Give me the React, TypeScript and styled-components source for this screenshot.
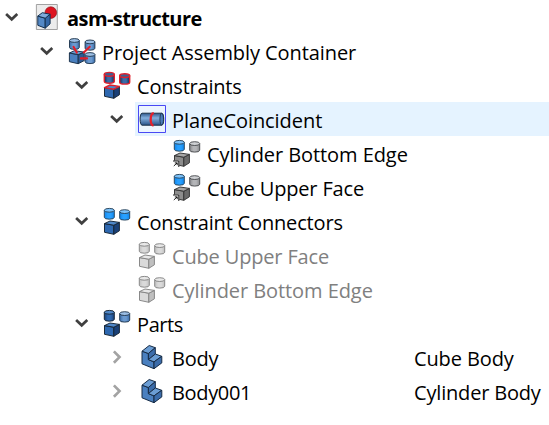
import React from "react";
import styled, { createGlobalStyle } from "styled-components";

const GlobalStyle = createGlobalStyle`
  *, *::before, *::after { box-sizing: border-box; }
  body {
    margin: 0;
    background: #fff;
    color: #000;
    font-family: "Open Sans", "Noto Sans", sans-serif;
    font-size: 20px;
    overflow: hidden;
  }
`;

const Tree = styled.div`
  width: 549px;
  height: 425px;
  overflow: hidden;
  background: #fff;
`;

const Row = styled.div`
  display: grid;
  grid-template-columns: 414px 1fr;
  height: 34px;
`;

const NameCell = styled.div<{ $depth: number; $selected?: boolean }>`
  display: flex;
  align-items: center;
  grid-column: ${(p) => (p.$selected ? "1 / -1" : "auto")};
  margin-left: ${(p) => p.$depth * 35}px;
  background: ${(p) => (p.$selected ? "#e5f3ff" : "transparent")};
`;

/* The highlight starts at the icon, so the toggle keeps the page background. */
const Toggle = styled.span`
  display: flex;
  align-items: center;
  justify-content: center;
  width: 30px;
  height: 34px;
  padding-right: 7px;
  background: #fff;
`;

const IconSlot = styled.span`
  display: flex;
  width: 28px;
  height: 28px;
  margin-left: 3px;
  svg { display: block; overflow: visible; }
`;

const Label = styled.span<{ $bold?: boolean; $muted?: boolean; $tracking?: number }>`
  margin-left: 6px;
  padding-top: 3px;
  line-height: 31px;
  white-space: nowrap;
  font-weight: ${(p) => (p.$bold ? 700 : 400)};
  color: ${(p) => (p.$muted ? "#808080" : "#000")};
  letter-spacing: ${(p) => p.$tracking ?? 0}px;
`;

const Description = styled.span<{ $tracking?: number }>`
  padding-top: 3px;
  line-height: 31px;
  white-space: nowrap;
  letter-spacing: ${(p) => p.$tracking ?? 0}px;
`;

type Paint = { light: string; mid: string; dark: string; line: string; rim?: string };

const blue: Paint = { light: "#9cbfe6", mid: "#6b9ad0", dark: "#3a6cab", line: "#22384f" };
const navy: Paint = { light: "#4f87c8", mid: "#2e68b0", dark: "#1a4077", line: "#142333" };
const bright: Paint = { light: "#7cc2fa", mid: "#28a0ff", dark: "#0f84ea", line: "#27435c" };
const red: Paint = { light: "#3c5f92", mid: "#3a6ba8", dark: "#132f58", line: "#182438", rim: "#e0202c" };
const gray: Paint = { light: "#cfd1d4", mid: "#b4b5b8", dark: "#88898c", line: "#4a4c4f" };
const grayBlock: Paint = { light: "#a6a6a6", mid: "#8d8d8d", dark: "#6a6a6a", line: "#333" };
const pale: Paint = { light: "#e8e8e8", mid: "#dadada", dark: "#c0c0c0", line: "#848484" };

function Cylinder({ x, y, w, h, paint }: { x: number; y: number; w: number; h: number; paint: Paint }) {
  const id = React.useId();
  const ry = 1.9;
  const body = `M${x} ${y + ry}V${y + h - ry}A${w / 2} ${ry} 0 0 0 ${x + w} ${y + h - ry}V${y + ry}`;
  const edge = paint.rim ?? paint.line;
  return (
    <g strokeWidth={paint.rim ? 1.4 : 0.95}>
      <linearGradient id={id}>
        <stop offset="0" stopColor={paint.dark} />
        <stop offset="0.35" stopColor={paint.mid} />
        <stop offset="0.65" stopColor={paint.mid} />
        <stop offset="1" stopColor={paint.dark} />
      </linearGradient>
      <path d={body} fill={`url(#${id})`} stroke={edge} />
      <ellipse cx={x + w / 2} cy={y + ry} rx={w / 2} ry={ry} fill={paint.light} stroke={edge} />
    </g>
  );
}

function Cube({ paint }: { paint: Paint }) {
  return (
    <g stroke={paint.line} strokeWidth="0.95" strokeLinejoin="round">
      <path d="M1.5 16.6 10.8 18.2V27.3L1.5 25.3Z" fill={paint.mid} />
      <path d="M10.8 18.2 16.4 15.4V23.8L10.8 27.3Z" fill={paint.dark} />
      <path d="M1.5 16.6 7 14 16.4 15.4 10.8 18.2Z" fill={paint.light} stroke={paint.rim ?? paint.line} strokeWidth={paint.rim ? 1.4 : 0.95} />
    </g>
  );
}

function GroupIcon({ first, second, cube, link }: { first: Paint; second: Paint; cube: Paint; link?: boolean }) {
  return (
    <svg width="28" height="28" viewBox="0 0 28 28">
      <Cube paint={cube} />
      <Cylinder x={1.3} y={1.4} w={10} h={10.8} paint={first} />
      <Cylinder x={16.7} y={2.7} w={10} h={10.4} paint={second} />
      {link && (
        <g>
          <path d="M0 21.6H6.2V28H0Z" fill="#fff" />
          <path d="M0 22H5.8V28" fill="none" stroke="#000" strokeWidth="0.9" />
          <path d="M.8 27 4.2 23.8M1.8 23.9H4.2V26.2" fill="none" stroke="#000" strokeWidth="0.9" />
        </g>
      )}
    </svg>
  );
}

function AssemblyIcon() {
  return (
    <svg width="28" height="28" viewBox="0 0 28 28">
      <Cylinder x={1.5} y={1.6} w={9.8} h={10.8} paint={blue} />
      <Cylinder x={17.1} y={3} w={9.8} h={10.2} paint={blue} />
      <g stroke="#182f48" strokeWidth="0.95" strokeLinejoin="round">
        <path d="M1.4 16 10.2 17.6V26.7L1.4 24.7Z" fill="#4a80bf" />
        <path d="m10.2 17.6 6-2.5v8.5l-6 3.1Z" fill="#2c5a94" />
        <path d="m1.4 16 5-2.3 9.8 1.4-6 2.5Z" fill="#6b9bd1" />
      </g>
      <Cylinder x={17.1} y={15.6} w={9.8} h={11} paint={blue} />
      <g stroke="#e01e2a" strokeWidth="2.1" strokeLinecap="round">
        <path d="M5.5 9.8 8.8 15.6M21.7 9.7 15.8 15.5M12.8 21.4H19" />
      </g>
    </svg>
  );
}

function DocumentIcon() {
  return (
    <svg width="28" height="28" viewBox="0 0 28 28">
      <path d="M3.4 1.5H24.3V26.5H3.4Z" fill="#ececec" stroke="#999" strokeWidth="0.9" />
      <circle cx="17.8" cy="9.6" r="5.8" fill="#dd1420" stroke="#8e141c" strokeWidth=".7" />
      <g stroke="#14304f" strokeWidth="1" strokeLinejoin="round">
        <path d="M4.8 13.1 12.2 15.2V25.2L4.8 22.3Z" fill="#5489c6" />
        <path d="m12.2 15.2 4.9-4v9.6l-4.9 4.4Z" fill="#3467a6" />
        <path d="m4.8 13.1 4.5-3.4 7.8 1.5-4.9 4Z" fill="#7eaadb" />
      </g>
    </svg>
  );
}

function CoincidentIcon() {
  return (
    <svg width="28" height="28" viewBox="0 0 28 28">
      <defs>
        <linearGradient id="shaft" x2="0" y2="1">
          <stop stopColor="#2d578b" />
          <stop offset=".4" stopColor="#84afdd" />
          <stop offset="1" stopColor="#27528a" />
        </linearGradient>
      </defs>
      <path d="M.5.5H27.5V27.5H.5Z" fill="#ecf5fe" stroke="#4949f4" />
      <path d="M4 8.2H23.8C26.4 8.2 26.4 20.2 23.8 20.2H4C1.5 20.2 1.5 8.2 4 8.2Z" fill="url(#shaft)" stroke="#1a3048" />
      <ellipse cx="23.7" cy="14.2" rx="1.8" ry="5.8" fill="#4a7cb8" stroke="#1a3048" strokeWidth=".8" />
      <path d="M15.8 8.2C11.7 8.6 11.7 20 15.5 20.6" fill="none" stroke="#e3202c" strokeWidth="2.3" />
    </svg>
  );
}

function BodyIcon() {
  return (
    <svg width="28" height="28" viewBox="0 0 28 28">
      <g stroke="#162b45" strokeWidth="1" strokeLinejoin="round">
        <path d="M4 8.2 10.4 10.5V16.6L16 18.9V25.7L4 20.8Z" fill="#4a80c0" />
        <path d="M4 8.2 11.2 2.5 17.3 4.7 10.4 10.5Z" fill="#6b9dd4" />
        <path d="M10.4 10.5 17.3 4.7V11L10.4 16.6Z" fill="#3b6caa" />
        <path d="M10.4 16.6 17.3 11 23.8 13.3 16 18.9Z" fill="#6b9dd4" />
        <path d="M16 18.9 23.8 13.3V19.9L16 25.7Z" fill="#3b6caa" />
      </g>
    </svg>
  );
}

function Chevron({ open }: { open: boolean }) {
  return (
    <svg width="14" height="16" viewBox="0 0 14 16">
      {open ? (
        <path d="M1.1 5 6.7 10.3 12.3 5" fill="none" stroke="#404040" strokeWidth="2.7" />
      ) : (
        <path d="M3.9 2.4 9.5 8.1 3.9 13.8" fill="none" stroke="#a3a3a3" strokeWidth="2.7" />
      )}
    </svg>
  );
}

type Item = {
  depth: number;
  name: string;
  icon: React.ReactNode;
  open?: boolean;
  bold?: boolean;
  muted?: boolean;
  selected?: boolean;
  tracking?: number;
  description?: string;
  descriptionTracking?: number;
};

const linkIcon = <GroupIcon first={bright} second={gray} cube={grayBlock} link />;
const mutedIcon = <GroupIcon first={pale} second={pale} cube={pale} />;

const items: Item[] = [
  { depth: 0, name: "asm-structure", icon: <DocumentIcon />, open: true, bold: true, tracking: -0.56 },
  { depth: 1, name: "Project Assembly Container", icon: <AssemblyIcon />, open: true, tracking: -0.08 },
  { depth: 2, name: "Constraints", icon: <GroupIcon first={red} second={red} cube={{ ...navy, rim: "#e0202c" }} />, open: true, tracking: -0.2 },
  { depth: 3, name: "PlaneCoincident", icon: <CoincidentIcon />, open: true, selected: true, tracking: -0.06 },
  { depth: 4, name: "Cylinder Bottom Edge", icon: linkIcon, tracking: -0.07 },
  { depth: 4, name: "Cube Upper Face", icon: linkIcon, tracking: -0.16 },
  { depth: 2, name: "Constraint Connectors", icon: <GroupIcon first={bright} second={bright} cube={navy} />, open: true, tracking: -0.17 },
  { depth: 3, name: "Cube Upper Face", icon: mutedIcon, muted: true, tracking: -0.16 },
  { depth: 3, name: "Cylinder Bottom Edge", icon: mutedIcon, muted: true, tracking: -0.07 },
  { depth: 2, name: "Parts", icon: <GroupIcon first={navy} second={blue} cube={navy} />, open: true, tracking: -0.4 },
  { depth: 3, name: "Body", icon: <BodyIcon />, open: false, tracking: -0.2, description: "Cube Body", descriptionTracking: -0.12 },
  { depth: 3, name: "Body001", icon: <BodyIcon />, open: false, tracking: -0.35, description: "Cylinder Body", descriptionTracking: -0.18 },
];

export default function App() {
  return (
    <>
      <GlobalStyle />
      <Tree role="tree">
        {items.map((item, i) => (
          <Row key={i} role="treeitem">
            <NameCell $depth={item.depth} $selected={item.selected}>
              <Toggle>{item.open !== undefined && <Chevron open={item.open} />}</Toggle>
              <IconSlot>{item.icon}</IconSlot>
              <Label $bold={item.bold} $muted={item.muted} $tracking={item.tracking}>
                {item.name}
              </Label>
            </NameCell>
            {item.description && (
              <Description $tracking={item.descriptionTracking}>{item.description}</Description>
            )}
          </Row>
        ))}
      </Tree>
    </>
  );
}
